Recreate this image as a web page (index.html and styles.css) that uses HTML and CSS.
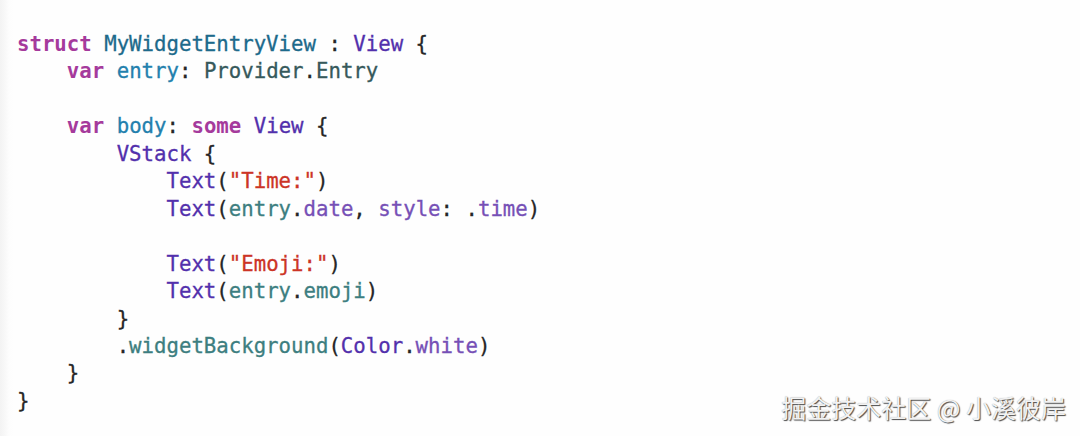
FILE: index.html
```html
<!DOCTYPE html>
<html lang="zh">
<head>
<meta charset="utf-8">
<title>MyWidgetEntryView</title>
<link rel="stylesheet" href="styles.css">
</head>
<body>
<main class="page">
<pre class="code"><span class="kw">struct</span> <span class="decl-type">MyWidgetEntryView</span> : <span class="sys-type">View</span> {
    <span class="kw">var</span> <span class="decl">entry</span>: <span class="proj-type">Provider</span>.<span class="proj-type">Entry</span>

    <span class="kw">var</span> <span class="decl">body</span>: <span class="kw">some</span> <span class="sys-type">View</span> {
        <span class="sys-type">VStack</span> {
            <span class="sys-type">Text</span>(<span class="str">"Time:"</span>)
            <span class="sys-type">Text</span>(<span class="proj">entry</span>.<span class="sys-prop">date</span>, <span class="sys-prop">style</span>: .<span class="sys-prop">time</span>)

            <span class="sys-type">Text</span>(<span class="str">"Emoji:"</span>)
            <span class="sys-type">Text</span>(<span class="proj">entry</span>.<span class="proj">emoji</span>)
        }
        .<span class="proj">widgetBackground</span>(<span class="sys-type">Color</span>.<span class="sys-prop">white</span>)
    }
}</pre>
<div class="watermark">掘金技术社区 @ 小溪彼岸</div>
</main>
</body>
</html>
```

FILE: styles.css
```css
html, body {
  margin: 0;
  padding: 0;
}

body {
  width: 1080px;
  height: 436px;
  overflow: hidden;
  background: linear-gradient(to right, #f3f3f3 0px, #f8f8f8 5px, #fdfdfd 9px, #fefefe 14px);
}

.page {
  position: relative;
  width: 1080px;
  height: 436px;
}

.code {
  margin: 0;
  padding: 31px 0 0 17px;
  font-family: "DejaVu Sans Mono", "Liberation Mono", monospace;
  font-size: 20.7px;
  line-height: 27.46px;
  color: #262626;
  white-space: pre;
  -webkit-text-stroke: 0.3px currentColor;
}

.kw { color: #a53a9c; font-weight: bold; -webkit-text-stroke: 0; }
.decl-type { color: #1d6a8b; }
.decl { color: #2380ad; }
.proj-type { color: #36595b; }
.proj { color: #3d7e80; }
.sys-type { color: #5230ac; }
.sys-prop { color: #7650b6; }
.str { color: #cc3426; }

.watermark {
  position: absolute;
  right: 14px;
  bottom: 14px;
  font-family: "Noto Sans CJK SC", "Noto Sans", sans-serif;
  font-size: 25px;
  line-height: 30px;
  color: #f2f2f2;
  text-shadow: 1px 1px 1px rgba(0, 0, 0, 0.7), 0 0 1px rgba(0, 0, 0, 0.35);
}
```
